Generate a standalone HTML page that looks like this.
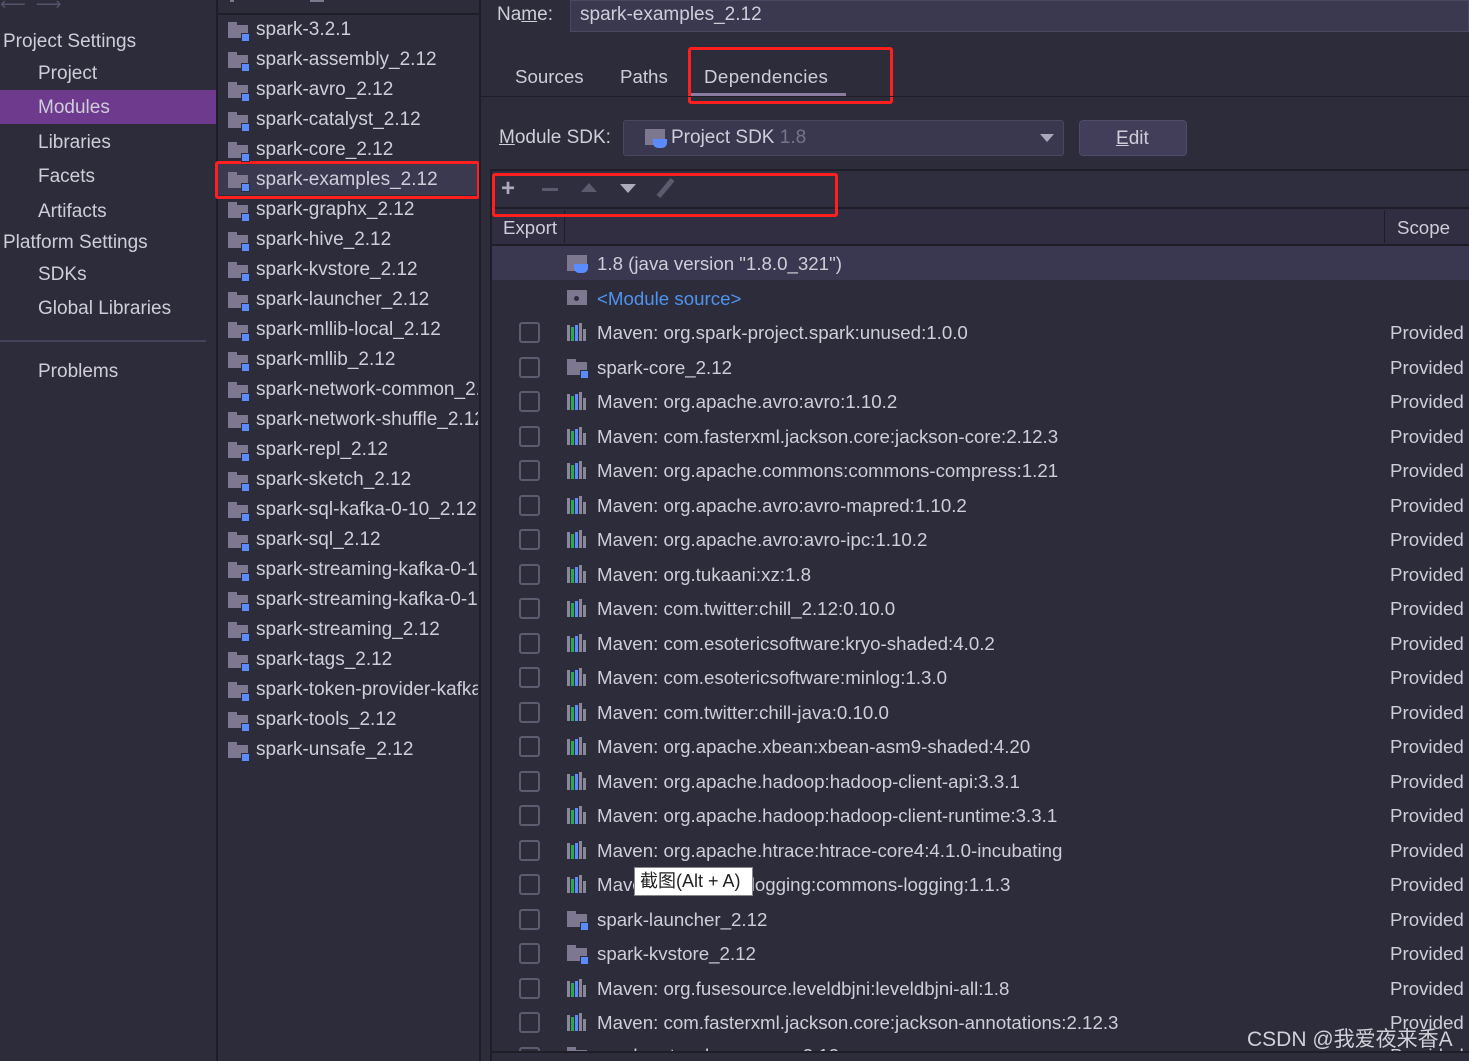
<!DOCTYPE html>
<html><head><meta charset="utf-8">
<style>
*{margin:0;padding:0;box-sizing:border-box}
body{width:1469px;height:1061px;overflow:hidden;background:#2d2c3a;font-family:"Liberation Sans","Noto Sans CJK SC",sans-serif;color:#cfcdd8;position:relative}
.a{position:absolute;white-space:nowrap}
.t19{font-size:19px;line-height:26px}
.t18{font-size:18.7px;line-height:26px}
.s19{font-size:19px;line-height:26px}
.fd{position:absolute;width:22px;height:16px}
.fd:before{content:"";position:absolute;left:0;top:0;width:9px;height:4px;background:#7d7890}
.fd:after{content:"";position:absolute;left:0;top:3px;width:20px;height:13px;background:#7d7890}
.fd i{position:absolute;right:0;bottom:-4px;width:9px;height:9px;background:#5a8cff;z-index:2;border:1px solid #2d2c3a}
.mv{position:absolute;width:22px;height:18px}
.mv b{position:absolute;bottom:0;width:3px}
.cb{position:absolute;left:519px;width:21px;height:21px;border:2px solid #5e5b70;border-radius:3px}
.pr{position:absolute;left:1390px;font-size:18.7px;line-height:26px}
</style></head><body>
<!-- left sidebar -->
<div class="a" style="left:0;top:-6px;color:#55536a;font-size:18px">⟵&nbsp;&nbsp;⟶</div>
<div class="a s19" style="left:3px;top:29px">Project Settings</div>
<div class="a s19" style="left:38px;top:61px">Project</div>
<div class="a" style="left:0;top:90px;width:216px;height:34px;background:#6d3a8e"></div>
<div class="a s19" style="left:38px;top:95px">Modules</div>
<div class="a s19" style="left:38px;top:130px">Libraries</div>
<div class="a s19" style="left:38px;top:164px">Facets</div>
<div class="a s19" style="left:38px;top:199px">Artifacts</div>
<div class="a s19" style="left:3px;top:230px">Platform Settings</div>
<div class="a s19" style="left:38px;top:262px">SDKs</div>
<div class="a s19" style="left:38px;top:296px">Global Libraries</div>
<div class="a" style="left:0;top:340px;width:206px;height:2px;background:#45435a"></div>
<div class="a s19" style="left:38px;top:359px">Problems</div>
<div class="a" style="left:216px;top:0;width:2px;height:1061px;background:#1e1d28"></div>

<!-- module list -->
<div class="a" style="left:218px;top:13px;width:262px;height:2px;background:#1e1d28"></div>
<div class="a" style="left:230px;top:-8px;width:4px;height:10px;background:#7d7890"></div>
<div class="a" style="left:310px;top:-6px;width:14px;height:8px;background:#7d7890"></div>
<div class="a" style="left:218px;top:164px;width:260px;height:31px;background:#3b3950"></div>
<div class="a" style="left:218px;top:17px;width:260px;height:760px;overflow:hidden">
<div style="position:relative">
<div class="fd" style="left:10px;top:5px"><i></i></div><div class="a t19" style="left:38px;top:0">spark-3.2.1</div>
<div class="fd" style="left:10px;top:35px"><i></i></div><div class="a t19" style="left:38px;top:30px">spark-assembly_2.12</div>
<div class="fd" style="left:10px;top:65px"><i></i></div><div class="a t19" style="left:38px;top:60px">spark-avro_2.12</div>
<div class="fd" style="left:10px;top:95px"><i></i></div><div class="a t19" style="left:38px;top:90px">spark-catalyst_2.12</div>
<div class="fd" style="left:10px;top:125px"><i></i></div><div class="a t19" style="left:38px;top:120px">spark-core_2.12</div>
<div class="fd" style="left:10px;top:155px"><i></i></div><div class="a t19" style="left:38px;top:150px">spark-examples_2.12</div>
<div class="fd" style="left:10px;top:185px"><i></i></div><div class="a t19" style="left:38px;top:180px">spark-graphx_2.12</div>
<div class="fd" style="left:10px;top:215px"><i></i></div><div class="a t19" style="left:38px;top:210px">spark-hive_2.12</div>
<div class="fd" style="left:10px;top:245px"><i></i></div><div class="a t19" style="left:38px;top:240px">spark-kvstore_2.12</div>
<div class="fd" style="left:10px;top:275px"><i></i></div><div class="a t19" style="left:38px;top:270px">spark-launcher_2.12</div>
<div class="fd" style="left:10px;top:305px"><i></i></div><div class="a t19" style="left:38px;top:300px">spark-mllib-local_2.12</div>
<div class="fd" style="left:10px;top:335px"><i></i></div><div class="a t19" style="left:38px;top:330px">spark-mllib_2.12</div>
<div class="fd" style="left:10px;top:365px"><i></i></div><div class="a t19" style="left:38px;top:360px">spark-network-common_2.12</div>
<div class="fd" style="left:10px;top:395px"><i></i></div><div class="a t19" style="left:38px;top:390px">spark-network-shuffle_2.12</div>
<div class="fd" style="left:10px;top:425px"><i></i></div><div class="a t19" style="left:38px;top:420px">spark-repl_2.12</div>
<div class="fd" style="left:10px;top:455px"><i></i></div><div class="a t19" style="left:38px;top:450px">spark-sketch_2.12</div>
<div class="fd" style="left:10px;top:485px"><i></i></div><div class="a t19" style="left:38px;top:480px">spark-sql-kafka-0-10_2.12</div>
<div class="fd" style="left:10px;top:515px"><i></i></div><div class="a t19" style="left:38px;top:510px">spark-sql_2.12</div>
<div class="fd" style="left:10px;top:545px"><i></i></div><div class="a t19" style="left:38px;top:540px">spark-streaming-kafka-0-10</div>
<div class="fd" style="left:10px;top:575px"><i></i></div><div class="a t19" style="left:38px;top:570px">spark-streaming-kafka-0-10</div>
<div class="fd" style="left:10px;top:605px"><i></i></div><div class="a t19" style="left:38px;top:600px">spark-streaming_2.12</div>
<div class="fd" style="left:10px;top:635px"><i></i></div><div class="a t19" style="left:38px;top:630px">spark-tags_2.12</div>
<div class="fd" style="left:10px;top:665px"><i></i></div><div class="a t19" style="left:38px;top:660px">spark-token-provider-kafka</div>
<div class="fd" style="left:10px;top:695px"><i></i></div><div class="a t19" style="left:38px;top:690px">spark-tools_2.12</div>
<div class="fd" style="left:10px;top:725px"><i></i></div><div class="a t19" style="left:38px;top:720px">spark-unsafe_2.12</div>
</div></div>
<div class="a" style="left:215px;top:161px;width:265px;height:38px;border:3px solid #ff1f1f;border-radius:3px"></div>
<div class="a" style="left:479px;top:0;width:2px;height:1061px;background:#1e1d28"></div>

<!-- right panel -->
<div class="a t19" style="left:497px;top:2px">Na<u>m</u>e:</div>
<div class="a" style="left:570px;top:0;width:899px;height:32px;background:#3b3950;border:1px solid #4a4760"></div>
<div class="a t19" style="left:580px;top:2px">spark-examples_2.12</div>
<div class="a t18" style="left:515px;top:64px">Sources</div>
<div class="a t18" style="left:620px;top:64px">Paths</div>
<div class="a t18" style="left:704px;top:64px;letter-spacing:0.4px">Dependencies</div>
<div class="a" style="left:688px;top:93px;width:158px;height:4px;background:#8a7ba0"></div>
<div class="a" style="left:688px;top:47px;width:205px;height:57px;border:3px solid #ff1f1f;border-radius:3px"></div>
<div class="a" style="left:481px;top:96px;width:988px;height:1px;background:#1e1d28"></div>

<div class="a t19" style="left:499px;top:125px"><u>M</u>odule SDK:</div>
<div class="a" style="left:623px;top:120px;width:441px;height:36px;background:#3a384e;border:1px solid #4a4760;border-radius:3px"></div>
<div class="a" style="left:645px;top:129px;width:20px;height:16px;background:#7d7890"></div>
<div class="a" style="left:653px;top:139px;width:14px;height:9px;background:#5a8cff;border-radius:0 0 5px 5px"></div>
<div class="a t19" style="left:671px;top:125px">Project SDK <span style="color:#77748a">1.8</span></div>
<div class="a" style="left:1040px;top:134px;width:0;height:0;border-left:7px solid transparent;border-right:7px solid transparent;border-top:8px solid #aaa8b8"></div>
<div class="a" style="left:1079px;top:120px;width:108px;height:36px;background:#423e5a;border:1px solid #4f4b68;border-radius:4px"></div>
<div class="a t19" style="left:1116px;top:126px"><u>E</u>dit</div>

<!-- table frame -->
<div class="a" style="left:490px;top:169px;width:979px;height:2px;background:#1e1d28"></div>
<div class="a" style="left:490px;top:169px;width:2px;height:892px;background:#1e1d28"></div>
<div class="a" style="left:492px;top:171px;width:977px;height:36px;background:#2f2e3e"></div>
<div class="a" style="left:501px;top:178px;color:#aeacbc;font-size:24px;line-height:22px;font-weight:bold">+</div>
<div class="a" style="left:542px;top:188px;width:16px;height:3px;background:#5d5a6e"></div>
<div class="a" style="left:581px;top:183px;width:0;height:0;border-left:8px solid transparent;border-right:8px solid transparent;border-bottom:9px solid #5d5a6e"></div>
<div class="a" style="left:620px;top:184px;width:0;height:0;border-left:8px solid transparent;border-right:8px solid transparent;border-top:9px solid #aeacbc"></div>
<div class="a" style="left:663px;top:177px;width:5px;height:22px;background:#5d5a6e;transform:rotate(40deg)"></div>
<div class="a" style="left:492px;top:207px;width:977px;height:2px;background:#1e1d28"></div>
<div class="a" style="left:492px;top:209px;width:977px;height:35px;background:#302e40"></div>
<div class="a" style="left:564px;top:210px;width:1px;height:33px;background:#1e1d28"></div>
<div class="a" style="left:1384px;top:210px;width:1px;height:33px;background:#1e1d28"></div>
<div class="a t18" style="left:503px;top:215px">Export</div>
<div class="a t18" style="left:1397px;top:215px">Scope</div>
<div class="a" style="left:492px;top:173px;width:346px;height:44px;border:3px solid #ff1f1f;border-radius:3px"></div>
<div class="a" style="left:492px;top:244px;width:977px;height:2px;background:#1e1d28"></div>
<div class="a" style="left:492px;top:246px;width:977px;height:34px;background:#3a3850"></div>
<div class="a" style="left:492px;top:1051px;width:977px;height:2px;background:#1e1d28"></div>

<div class="a" style="left:567px;top:255px;width:20px;height:16px;background:#7d7890"></div><div class="a" style="left:574px;top:264px;width:14px;height:9px;background:#5a8cff;border-radius:0 0 5px 5px"></div>
<div class="a t18" style="left:597px;top:251px">1.8 (java version "1.8.0_321")</div>
<div class="a" style="left:567px;top:290px;width:20px;height:15px;background:#7d7890"></div><div class="a" style="left:574px;top:296px;width:5px;height:5px;background:#2d2c3a;border-radius:50%"></div>
<div class="a t18" style="left:597px;top:286px;color:#4f94f0">&lt;Module source&gt;</div>

<div class="a" style="left:0;top:0;width:1469px;height:1051px;overflow:hidden">
<div class="cb" style="top:322px"></div><div class="mv" style="left:567px;top:323px"><b style="left:0;height:16px;background:#8a879a"></b><b style="left:4px;height:14px;background:#2ea84f"></b><b style="left:8px;height:16px;background:#5a8cff"></b><b style="left:12px;height:18px;background:#8a879a"></b><b style="left:16px;height:12px;background:#8a879a"></b></div><div class="a t18" style="left:597px;top:320px">Maven: org.spark-project.spark:unused:1.0.0</div><div class="pr" style="top:320px">Provided</div>
<div class="cb" style="top:357px"></div><div class="fd" style="left:567px;top:359px"><i></i></div><div class="a t18" style="left:597px;top:355px">spark-core_2.12</div><div class="pr" style="top:355px">Provided</div>
<div class="cb" style="top:391px"></div><div class="mv" style="left:567px;top:392px"><b style="left:0;height:16px;background:#8a879a"></b><b style="left:4px;height:14px;background:#2ea84f"></b><b style="left:8px;height:16px;background:#5a8cff"></b><b style="left:12px;height:18px;background:#8a879a"></b><b style="left:16px;height:12px;background:#8a879a"></b></div><div class="a t18" style="left:597px;top:389px">Maven: org.apache.avro:avro:1.10.2</div><div class="pr" style="top:389px">Provided</div>
<div class="cb" style="top:426px"></div><div class="mv" style="left:567px;top:427px"><b style="left:0;height:16px;background:#8a879a"></b><b style="left:4px;height:14px;background:#2ea84f"></b><b style="left:8px;height:16px;background:#5a8cff"></b><b style="left:12px;height:18px;background:#8a879a"></b><b style="left:16px;height:12px;background:#8a879a"></b></div><div class="a t18" style="left:597px;top:424px">Maven: com.fasterxml.jackson.core:jackson-core:2.12.3</div><div class="pr" style="top:424px">Provided</div>
<div class="cb" style="top:460px"></div><div class="mv" style="left:567px;top:461px"><b style="left:0;height:16px;background:#8a879a"></b><b style="left:4px;height:14px;background:#2ea84f"></b><b style="left:8px;height:16px;background:#5a8cff"></b><b style="left:12px;height:18px;background:#8a879a"></b><b style="left:16px;height:12px;background:#8a879a"></b></div><div class="a t18" style="left:597px;top:458px">Maven: org.apache.commons:commons-compress:1.21</div><div class="pr" style="top:458px">Provided</div>
<div class="cb" style="top:495px"></div><div class="mv" style="left:567px;top:496px"><b style="left:0;height:16px;background:#8a879a"></b><b style="left:4px;height:14px;background:#2ea84f"></b><b style="left:8px;height:16px;background:#5a8cff"></b><b style="left:12px;height:18px;background:#8a879a"></b><b style="left:16px;height:12px;background:#8a879a"></b></div><div class="a t18" style="left:597px;top:493px">Maven: org.apache.avro:avro-mapred:1.10.2</div><div class="pr" style="top:493px">Provided</div>
<div class="cb" style="top:529px"></div><div class="mv" style="left:567px;top:530px"><b style="left:0;height:16px;background:#8a879a"></b><b style="left:4px;height:14px;background:#2ea84f"></b><b style="left:8px;height:16px;background:#5a8cff"></b><b style="left:12px;height:18px;background:#8a879a"></b><b style="left:16px;height:12px;background:#8a879a"></b></div><div class="a t18" style="left:597px;top:527px">Maven: org.apache.avro:avro-ipc:1.10.2</div><div class="pr" style="top:527px">Provided</div>
<div class="cb" style="top:564px"></div><div class="mv" style="left:567px;top:565px"><b style="left:0;height:16px;background:#8a879a"></b><b style="left:4px;height:14px;background:#2ea84f"></b><b style="left:8px;height:16px;background:#5a8cff"></b><b style="left:12px;height:18px;background:#8a879a"></b><b style="left:16px;height:12px;background:#8a879a"></b></div><div class="a t18" style="left:597px;top:562px">Maven: org.tukaani:xz:1.8</div><div class="pr" style="top:562px">Provided</div>
<div class="cb" style="top:598px"></div><div class="mv" style="left:567px;top:599px"><b style="left:0;height:16px;background:#8a879a"></b><b style="left:4px;height:14px;background:#2ea84f"></b><b style="left:8px;height:16px;background:#5a8cff"></b><b style="left:12px;height:18px;background:#8a879a"></b><b style="left:16px;height:12px;background:#8a879a"></b></div><div class="a t18" style="left:597px;top:596px">Maven: com.twitter:chill_2.12:0.10.0</div><div class="pr" style="top:596px">Provided</div>
<div class="cb" style="top:633px"></div><div class="mv" style="left:567px;top:634px"><b style="left:0;height:16px;background:#8a879a"></b><b style="left:4px;height:14px;background:#2ea84f"></b><b style="left:8px;height:16px;background:#5a8cff"></b><b style="left:12px;height:18px;background:#8a879a"></b><b style="left:16px;height:12px;background:#8a879a"></b></div><div class="a t18" style="left:597px;top:631px">Maven: com.esotericsoftware:kryo-shaded:4.0.2</div><div class="pr" style="top:631px">Provided</div>
<div class="cb" style="top:667px"></div><div class="mv" style="left:567px;top:668px"><b style="left:0;height:16px;background:#8a879a"></b><b style="left:4px;height:14px;background:#2ea84f"></b><b style="left:8px;height:16px;background:#5a8cff"></b><b style="left:12px;height:18px;background:#8a879a"></b><b style="left:16px;height:12px;background:#8a879a"></b></div><div class="a t18" style="left:597px;top:665px">Maven: com.esotericsoftware:minlog:1.3.0</div><div class="pr" style="top:665px">Provided</div>
<div class="cb" style="top:702px"></div><div class="mv" style="left:567px;top:703px"><b style="left:0;height:16px;background:#8a879a"></b><b style="left:4px;height:14px;background:#2ea84f"></b><b style="left:8px;height:16px;background:#5a8cff"></b><b style="left:12px;height:18px;background:#8a879a"></b><b style="left:16px;height:12px;background:#8a879a"></b></div><div class="a t18" style="left:597px;top:700px">Maven: com.twitter:chill-java:0.10.0</div><div class="pr" style="top:700px">Provided</div>
<div class="cb" style="top:736px"></div><div class="mv" style="left:567px;top:737px"><b style="left:0;height:16px;background:#8a879a"></b><b style="left:4px;height:14px;background:#2ea84f"></b><b style="left:8px;height:16px;background:#5a8cff"></b><b style="left:12px;height:18px;background:#8a879a"></b><b style="left:16px;height:12px;background:#8a879a"></b></div><div class="a t18" style="left:597px;top:734px">Maven: org.apache.xbean:xbean-asm9-shaded:4.20</div><div class="pr" style="top:734px">Provided</div>
<div class="cb" style="top:771px"></div><div class="mv" style="left:567px;top:772px"><b style="left:0;height:16px;background:#8a879a"></b><b style="left:4px;height:14px;background:#2ea84f"></b><b style="left:8px;height:16px;background:#5a8cff"></b><b style="left:12px;height:18px;background:#8a879a"></b><b style="left:16px;height:12px;background:#8a879a"></b></div><div class="a t18" style="left:597px;top:769px">Maven: org.apache.hadoop:hadoop-client-api:3.3.1</div><div class="pr" style="top:769px">Provided</div>
<div class="cb" style="top:805px"></div><div class="mv" style="left:567px;top:806px"><b style="left:0;height:16px;background:#8a879a"></b><b style="left:4px;height:14px;background:#2ea84f"></b><b style="left:8px;height:16px;background:#5a8cff"></b><b style="left:12px;height:18px;background:#8a879a"></b><b style="left:16px;height:12px;background:#8a879a"></b></div><div class="a t18" style="left:597px;top:803px">Maven: org.apache.hadoop:hadoop-client-runtime:3.3.1</div><div class="pr" style="top:803px">Provided</div>
<div class="cb" style="top:840px"></div><div class="mv" style="left:567px;top:841px"><b style="left:0;height:16px;background:#8a879a"></b><b style="left:4px;height:14px;background:#2ea84f"></b><b style="left:8px;height:16px;background:#5a8cff"></b><b style="left:12px;height:18px;background:#8a879a"></b><b style="left:16px;height:12px;background:#8a879a"></b></div><div class="a t18" style="left:597px;top:838px">Maven: org.apache.htrace:htrace-core4:4.1.0-incubating</div><div class="pr" style="top:838px">Provided</div>
<div class="cb" style="top:874px"></div><div class="mv" style="left:567px;top:875px"><b style="left:0;height:16px;background:#8a879a"></b><b style="left:4px;height:14px;background:#2ea84f"></b><b style="left:8px;height:16px;background:#5a8cff"></b><b style="left:12px;height:18px;background:#8a879a"></b><b style="left:16px;height:12px;background:#8a879a"></b></div><div class="a t18" style="left:597px;top:872px">Maven: commons-logging:commons-logging:1.1.3</div><div class="pr" style="top:872px">Provided</div>
<div class="cb" style="top:909px"></div><div class="fd" style="left:567px;top:911px"><i></i></div><div class="a t18" style="left:597px;top:907px">spark-launcher_2.12</div><div class="pr" style="top:907px">Provided</div>
<div class="cb" style="top:943px"></div><div class="fd" style="left:567px;top:945px"><i></i></div><div class="a t18" style="left:597px;top:941px">spark-kvstore_2.12</div><div class="pr" style="top:941px">Provided</div>
<div class="cb" style="top:978px"></div><div class="mv" style="left:567px;top:979px"><b style="left:0;height:16px;background:#8a879a"></b><b style="left:4px;height:14px;background:#2ea84f"></b><b style="left:8px;height:16px;background:#5a8cff"></b><b style="left:12px;height:18px;background:#8a879a"></b><b style="left:16px;height:12px;background:#8a879a"></b></div><div class="a t18" style="left:597px;top:976px">Maven: org.fusesource.leveldbjni:leveldbjni-all:1.8</div><div class="pr" style="top:976px">Provided</div>
<div class="cb" style="top:1012px"></div><div class="mv" style="left:567px;top:1013px"><b style="left:0;height:16px;background:#8a879a"></b><b style="left:4px;height:14px;background:#2ea84f"></b><b style="left:8px;height:16px;background:#5a8cff"></b><b style="left:12px;height:18px;background:#8a879a"></b><b style="left:16px;height:12px;background:#8a879a"></b></div><div class="a t18" style="left:597px;top:1010px">Maven: com.fasterxml.jackson.core:jackson-annotations:2.12.3</div><div class="pr" style="top:1010px">Provided</div>
<div class="cb" style="top:1047px"></div><div class="fd" style="left:567px;top:1047px"><i></i></div><div class="a t18" style="left:597px;top:1043px">spark-network-common_2.12</div><div class="pr" style="top:1043px">Provided</div>
</div>

<!-- tooltip -->
<div class="a" style="left:634px;top:867px;width:119px;height:29px;background:#fff;border:1px solid #888;color:#222;font-size:18px;line-height:27px;padding-left:5px">截图(Alt + A)</div>
<!-- watermark -->
<div class="a" style="left:1247px;top:1027px;font-size:21px;line-height:26px;color:#d0d0d8">CSDN @我爱夜来香A</div>
</body></html>
